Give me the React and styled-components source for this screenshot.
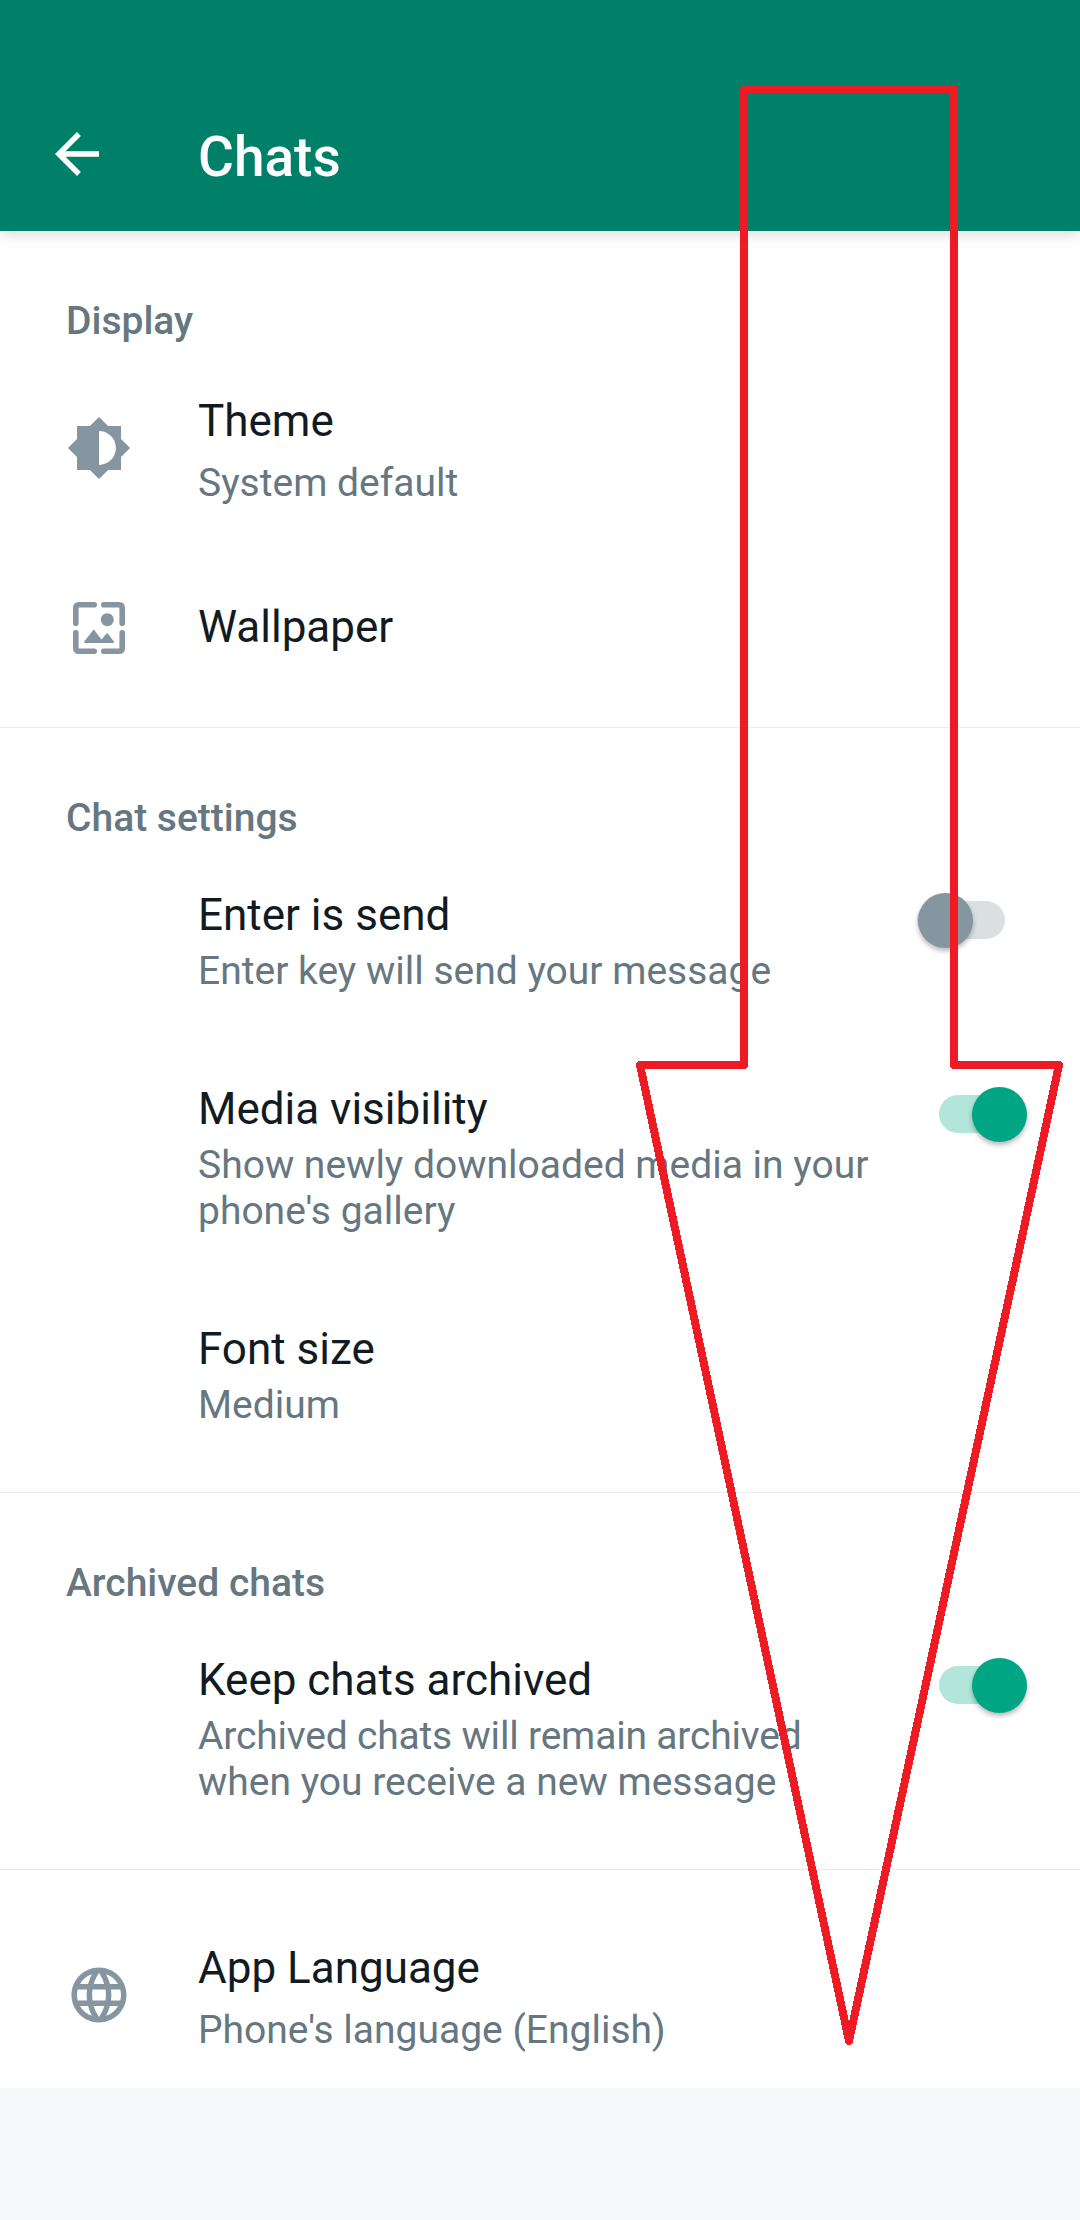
import React from "react";
import styled, { createGlobalStyle } from "styled-components";

const GlobalStyle = createGlobalStyle`
  * { box-sizing: border-box; }
  html, body { margin: 0; padding: 0; background: #f7f8fa; }
  body { font-family: Roboto, "Noto Sans", sans-serif; }
`;

const Screen = styled.div`
  position: relative;
  width: 1080px;
  height: 2220px;
  overflow: hidden;
  background: #f7f8fa;
`;

const AppBar = styled.header`
  position: relative;
  z-index: 1;
  display: flex;
  align-items: center;
  height: 231px;
  padding: 77px 44px 0;
  background: #008069;
  color: #fff;
  box-shadow: 0 2px 14px rgba(0, 0, 0, 0.17);
`;

const AppTitle = styled.h1`
  margin: 0;
  padding: 6px 0 0 88px;
  font-size: 55px;
  font-weight: 500;
  line-height: 64px;
`;

const Panel = styled.main`
  background: #fff;
`;

const Section = styled.section`
  padding: 67px 0 19px;
  & + & { border-top: 1px solid #e9ebec; }
  &:last-child { padding: 37px 0 0; }
`;

const SectionLabel = styled.h2`
  margin: 0 0 ${(p) => p.$gap}px;
  padding-left: 66px;
  color: #667781;
  font-size: 39px;
  font-weight: 500;
  line-height: 46px;
`;

const Row = styled.div`
  display: flex;
  align-items: flex-start;
  padding: 44px 53px 45px 198px;
`;

const IconRow = styled.div`
  display: flex;
  align-items: center;
  padding: ${(p) => (p.$single ? "52px 66px 47px" : "35px 66px")};
`;

const IconText = styled.div`
  margin-left: 66px;
`;

const RowText = styled.div`
  flex: 1;
`;

const Title = styled.div`
  color: #111b21;
  font-size: 44px;
  line-height: 52px;
  white-space: nowrap;
`;

const Summary = styled.div`
  margin-top: ${(p) => p.$gap ?? 7}px;
  color: #667781;
  font-size: 39px;
  line-height: 46px;
  white-space: pre-line;
`;

const TightLine = styled.span`
  display: block;
  letter-spacing: -0.19px;
`;

const Icon = styled.svg`
  flex: none;
  width: 66px;
  height: 66px;
  margin-top: ${(p) => p.$lift ?? 0}px;
  fill: ${(p) => p.$color ?? "#8696a0"};
`;

const Track = styled.div`
  display: flex;
  flex: none;
  align-items: center;
  justify-content: ${(p) => (p.$on ? "flex-end" : "flex-start")};
  width: 88px;
  height: 38px;
  margin: 12px ${(p) => (p.$on ? 0 : 22)}px 0 0;
  border-radius: 19px;
  background: ${(p) => (p.$on ? "#b2e6da" : "#dadfe2")};
`;

const Thumb = styled.div`
  flex: none;
  width: 55px;
  height: 55px;
  margin: 0 0.5px;
  border-radius: 50%;
  background: ${(p) => (p.$on ? "#00a683" : "#8696a0")};
  box-shadow: 0 3px 5px rgba(0, 0, 0, 0.28);
`;

const Annotation = styled.svg`
  position: absolute;
  inset: 0;
  z-index: 2;
  width: 1080px;
  height: 2220px;
  fill: none;
  stroke: #ed1c24;
  stroke-width: 8;
  stroke-linejoin: round;
  pointer-events: none;
`;

function Switch({ on }) {
  return (
    <Track $on={on} role="switch" aria-checked={on}>
      <Thumb $on={on} />
    </Track>
  );
}

function Setting({ title, summary, children }) {
  return (
    <Row>
      <RowText>
        <Title>{title}</Title>
        <Summary>{summary}</Summary>
      </RowText>
      {children}
    </Row>
  );
}

function BackIcon() {
  return (
    <Icon viewBox="0 0 24 24" $color="#fff">
      <path d="M20 11H7.83l5.59-5.59L12 4l-8 8 8 8 1.41-1.41L7.83 13H20v-2z" />
    </Icon>
  );
}

function BrightnessIcon() {
  return (
    <Icon viewBox="0 0 24 24" $lift={-5}>
      <path d="M20 15.31L23.31 12 20 8.69V4h-4.69L12 .69 8.69 4H4v4.69L.69 12 4 15.31V20h4.69L12 23.31 15.31 20H20v-4.69zM12 18.15V5.85c3.4 0 6.15 2.75 6.15 6.15s-2.75 6.15-6.15 6.15z" />
    </Icon>
  );
}

function WallpaperIcon() {
  return (
    <Icon viewBox="0 0 66 66" $lift={2}>
      <g fill="none" stroke="#8696a0" strokeWidth="5.6" strokeLinecap="round">
        <path d="M9.8 28.2V13q0-3.2 3.2-3.2h15.2" />
        <path d="M37.8 9.8H53q3.2 0 3.2 3.2v15.2" />
        <path d="M56.2 37.8V53q0 3.2-3.2 3.2H37.8" />
        <path d="M28.2 56.2H13q-3.2 0-3.2-3.2V37.8" />
      </g>
      <circle cx="41.3" cy="24.7" r="6.5" />
      <path
        d="M19 47l8.7-11.2L35.6 46l5.5-6.9L47.2 47z"
        stroke="#8696a0"
        strokeWidth="1.8"
        strokeLinejoin="round"
      />
    </Icon>
  );
}

function GlobeIcon() {
  return (
    <Icon viewBox="0 0 24 24" $lift={-5}>
      <path d="M11.99 2C6.47 2 2 6.48 2 12s4.47 10 9.99 10C17.52 22 22 17.52 22 12S17.52 2 11.99 2zm6.93 6h-2.95c-.32-1.25-.78-2.45-1.38-3.56 1.84.63 3.37 1.91 4.33 3.56zM12 4.04c.83 1.2 1.48 2.53 1.91 3.96h-3.82c.43-1.43 1.08-2.76 1.91-3.96zM4.26 14C4.1 13.36 4 12.69 4 12s.1-1.36.26-2h3.38c-.08.66-.14 1.32-.14 2 0 .68.06 1.34.14 2H4.26zm.82 2h2.95c.32 1.25.78 2.45 1.38 3.56-1.84-.63-3.37-1.9-4.33-3.56zm2.95-8H5.08c.96-1.66 2.49-2.93 4.33-3.56C8.81 5.55 8.35 6.75 8.03 8zM12 19.96c-.83-1.2-1.48-2.53-1.91-3.96h3.82c-.43 1.43-1.08 2.76-1.91 3.96zM14.34 14H9.66c-.09-.66-.16-1.32-.16-2 0-.68.07-1.35.16-2h4.68c.09.65.16 1.32.16 2 0 .68-.07 1.34-.16 2zm.25 5.56c.6-1.11 1.06-2.31 1.38-3.56h2.95c-.96 1.65-2.49 2.93-4.33 3.56zM16.36 14c.08-.66.14-1.32.14-2 0-.68-.06-1.34-.14-2h3.38c.16.64.26 1.31.26 2s-.1 1.36-.26 2h-3.38z" />
    </Icon>
  );
}

export default function App() {
  return (
    <Screen>
      <GlobalStyle />
      <AppBar>
        <BackIcon />
        <AppTitle>Chats</AppTitle>
      </AppBar>
      <Panel>
        <Section>
          <SectionLabel $gap={16}>Display</SectionLabel>
          <IconRow>
            <BrightnessIcon />
            <IconText>
              <Title>Theme</Title>
              <Summary $gap={13}>System default</Summary>
            </IconText>
          </IconRow>
          <IconRow $single>
            <WallpaperIcon />
            <IconText>
              <Title>Wallpaper</Title>
            </IconText>
          </IconRow>
        </Section>
        <Section>
          <SectionLabel $gap={4}>Chat settings</SectionLabel>
          <Setting title="Enter is send" summary="Enter key will send your message">
            <Switch on={false} />
          </Setting>
          <Setting
            title="Media visibility"
            summary={"Show newly downloaded media in your\nphone's gallery"}
          >
            <Switch on />
          </Setting>
          <Setting title="Font size" summary="Medium" />
        </Section>
        <Section>
          <SectionLabel $gap={4}>Archived chats</SectionLabel>
          <Setting
            title="Keep chats archived"
            summary={
              <>
                <TightLine>Archived chats will remain archived</TightLine>
                when you receive a new message
              </>
            }
          >
            <Switch on />
          </Setting>
        </Section>
        <Section>
          <IconRow>
            <GlobeIcon />
            <IconText>
              <Title>App Language</Title>
              <Summary $gap={13}>Phone's language (English)</Summary>
            </IconText>
          </IconRow>
        </Section>
      </Panel>
      <Annotation viewBox="0 0 1080 2220" shapeRendering="crispEdges">
        <path d="M744 89H954V1065H1059L849 2041L640 1065H744Z" />
      </Annotation>
    </Screen>
  );
}
